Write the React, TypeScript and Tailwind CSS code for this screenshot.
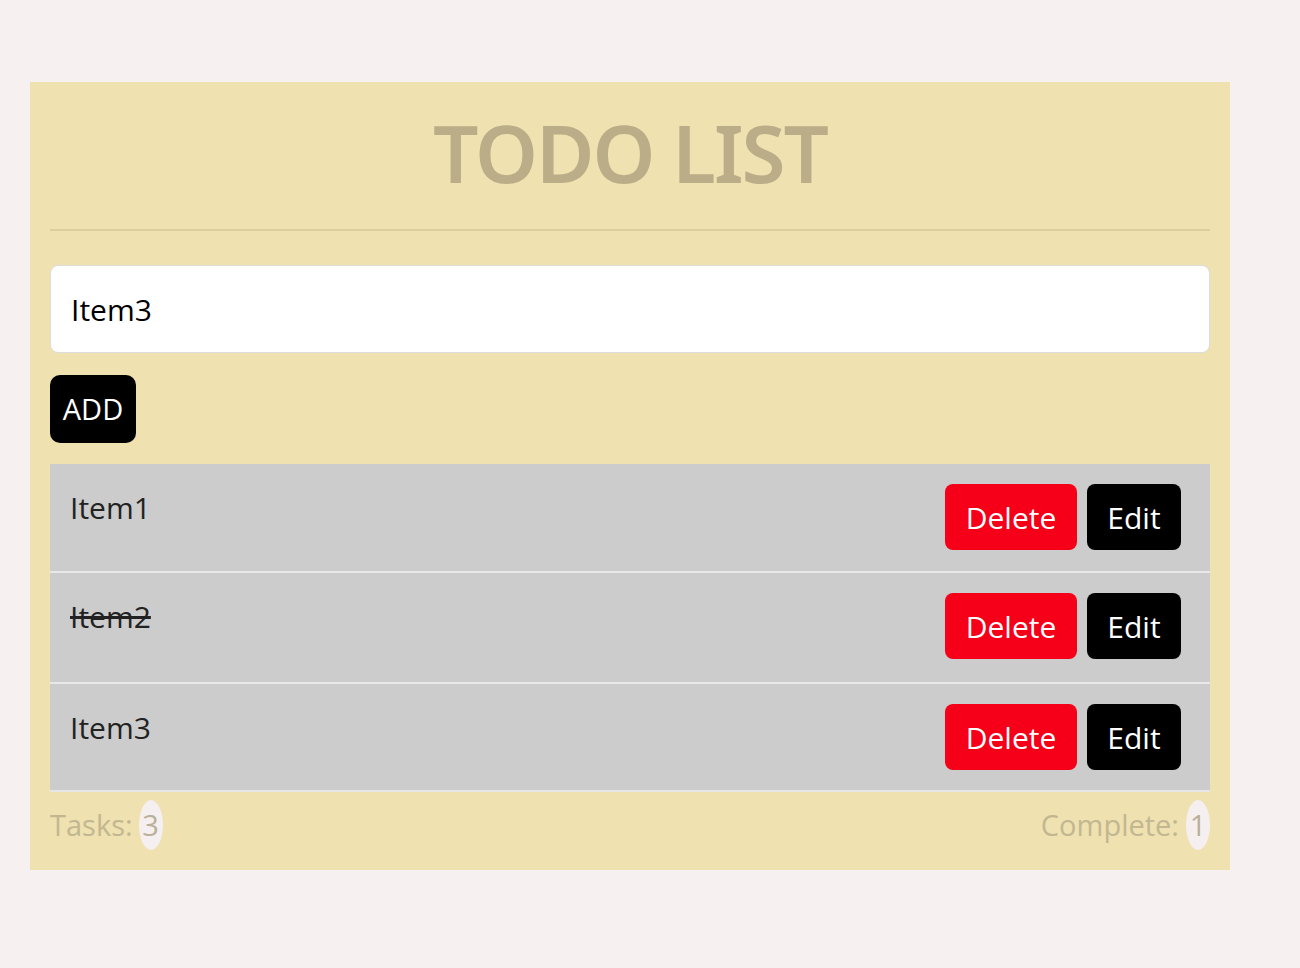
import React, { useState } from 'react';

type Todo = { id: number; text: string; done: boolean };

const INITIAL: Todo[] = [
  { id: 1, text: 'Item1', done: false },
  { id: 2, text: 'Item2', done: true },
  { id: 3, text: 'Item3', done: false },
];

const ROW_HEIGHTS = ['h-[107px]', 'h-[111px] border-t-2 border-[#e8e8e8]', 'h-[108px] border-t-2 border-[#e8e8e8]'];

export default function App() {
  const [todos, setTodos] = useState<Todo[]>(INITIAL);
  const [value, setValue] = useState('Item3');

  const add = () => {
    if (!value.trim()) return;
    setTodos((t) => [...t, { id: Date.now(), text: value, done: false }]);
    setValue('');
  };

  const done = todos.filter((t) => t.done).length;

  return (
    <div className="min-h-[968px] w-full bg-[#f7f0f0] pt-[82px] font-['Open_Sans','Noto_Sans',sans-serif]">
      <div className="ml-[30px] w-[1200px] bg-[#efe1b0] px-5 pb-5">
        <div className="flex h-[149px] items-center justify-center border-b-2 border-[#dccd9c] pb-[8px]">
          <h1 className="font-['Noto_Sans','Open_Sans',sans-serif] text-[80px] font-semibold leading-none tracking-[-2px] text-[#bbad88]">
            TODO LIST
          </h1>
        </div>

        <input
          value={value}
          onChange={(e) => setValue(e.target.value)}
          className="mt-[34px] h-[88px] w-full rounded-lg border border-[#dcdcdc] bg-white px-5 text-[30px] text-black outline-none"
        />

        <button
          onClick={add}
          className="mt-[22px] flex h-[68px] w-[86px] items-center justify-center rounded-[10px] bg-black text-[29px] text-white"
        >
          ADD
        </button>

        <ul className="mt-[21px] border-b-2 border-[#e6e6e6]">
          {todos.map((t, i) => (
            <li
              key={t.id}
              className={`flex items-start justify-between bg-[#cccccc] pl-5 pr-[29px] pt-5 ${ROW_HEIGHTS[i] ?? 'h-[109px] border-t-2 border-[#e8e8e8]'}`}
            >
              <span
                onClick={() =>
                  setTodos((all) => all.map((x) => (x.id === t.id ? { ...x, done: !x.done } : x)))
                }
                className={`mt-[4px] cursor-pointer text-[30px] leading-[40px] text-[#222] ${t.done ? 'line-through' : ''}`}
              >
                {t.text}
              </span>
              <div className="flex gap-[10px]">
                <button
                  onClick={() => setTodos((all) => all.filter((x) => x.id !== t.id))}
                  className="flex h-[66px] w-[132px] items-center justify-center rounded-lg bg-[#f50018] text-[30px] text-white"
                >
                  Delete
                </button>
                <button className="flex h-[66px] w-[94px] items-center justify-center rounded-lg bg-black text-[30px] text-white">
                  Edit
                </button>
              </div>
            </li>
          ))}
        </ul>

        <div className="mt-2 flex h-[50px] items-center justify-between text-[29px] text-[#c3b791]">
          <div className="flex items-center">
            <span>Tasks:</span>
            <span className="ml-[6px] flex h-[50px] w-[24px] items-center justify-center rounded-[50%] bg-[#f6efef] text-[#b9b09a]">
              {todos.length}
            </span>
          </div>
          <div className="flex items-center">
            <span>Complete:</span>
            <span className="ml-[7px] flex h-[50px] w-[24px] items-center justify-center rounded-[50%] bg-[#f6efef] text-[#b9b09a]">
              {done}
            </span>
          </div>
        </div>
      </div>
    </div>
  );
}
